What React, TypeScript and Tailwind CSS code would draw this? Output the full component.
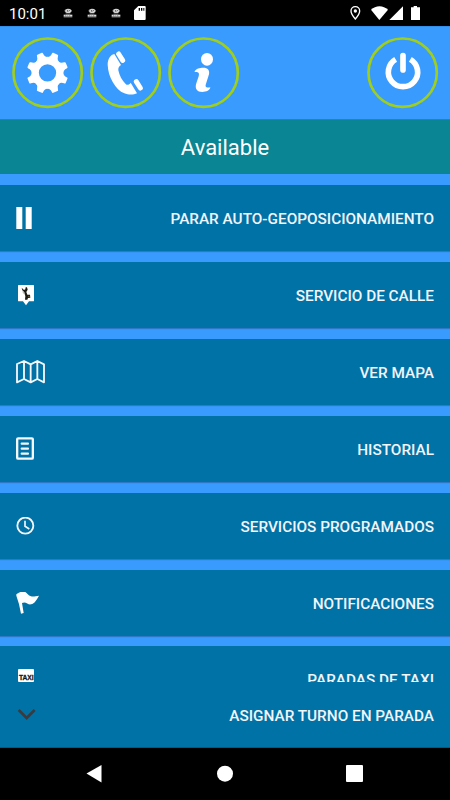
import type { ReactNode } from "react";

type RowProps = {
  label: string;
  icon: ReactNode;
};

function StatusBar() {
  return (
    <div className="h-[26px] shrink-0 bg-black flex text-white">
      <span className="w-[58px] pl-[9px] pt-[1px] text-[15px] leading-[26px]">
        10:01
      </span>
      <div className="flex gap-[14px] pl-[5px] pt-[8px]">
        <NoticeIcon />
        <NoticeIcon />
        <NoticeIcon />
      </div>
      <svg
        className="ml-[13px] mt-[6px] w-[12px] h-[14px]"
        viewBox="0 0 36 42"
        fill="white"
      >
        <path d="M13 0H32Q35 0 35 3V39Q35 42 32 42H3Q0 42 0 39V13Z" />
        <path d="M14 6h4v8h-4zM21 6h4v8h-4zM28 6h3v8h-3z" fill="black" />
      </svg>
      <svg
        className="ml-auto mt-[5px] w-[72px] h-[16px]"
        viewBox="567 15 216 48"
        fill="white"
      >
        <path
          d="M586 20C578 20 573 26 573 33C573 42 586 57 586 57S599 42 599 33C599 26 594 20 586 20Z"
          fill="none"
          stroke="white"
          strokeWidth="4"
        />
        <circle cx="586" cy="33" r="5" />
        <path d="M658 60L633 29C647 15 670 15 684 29Z" />
        <path d="M729 19V60H688Z" />
        <path d="M761 18h10v4h9v38h-27V22h8z" />
      </svg>
      <div className="w-[29px]" />
    </div>
  );
}

function NoticeIcon() {
  return (
    <svg className="w-[10px] h-[10px]" viewBox="0 0 30 30">
      <path
        d="M5 6L11 3L15 2L21 3L26 7L25 12L20 15H11L6 12Z"
        fill="#d4d4d4"
      />
      <path
        d="M3 9h5M13 6l2 6M20 6l-2 3"
        stroke="#333"
        strokeWidth="2"
      />
      <path d="M8 18h14" stroke="#aaa" strokeWidth="2" />
      <path d="M2 23h26" stroke="#ddd" strokeWidth="6" />
      <path
        d="M8 20v6M14 22v3M20 20v6"
        stroke="#555"
        strokeWidth="1.5"
      />
      <path d="M2 28h26" stroke="#888" strokeWidth="1.5" />
    </svg>
  );
}

function RoundButton({ children }: { children: ReactNode }) {
  return (
    <button type="button" className="w-[72px] h-[72px] rounded-full">
      <svg className="w-[72px] h-[72px]" viewBox="0 0 216 216" fill="white">
        <circle
          cx="107"
          cy="107"
          r="102.5"
          fill="none"
          stroke="#9fce1c"
          strokeWidth="8"
        />
        {children}
      </svg>
    </button>
  );
}

function Header() {
  const teeth = [22.5, 67.5, 112.5, 157.5, 202.5, 247.5, 292.5, 337.5];

  return (
    <header className="h-[93px] shrink-0 bg-[#3a9bff] border-t border-[#2f8fea] flex items-start gap-[6px] pl-[12px] pr-[11px] pt-[10px]">
      <RoundButton>
        <circle
          cx="106.5"
          cy="107.5"
          r="37"
          fill="none"
          stroke="white"
          strokeWidth="22"
        />
        {teeth.map((angle) => (
          <path
            key={angle}
            d="M-20 -41Q-10 -48 -10 -58Q-10 -62 -7 -62H7Q10 -62 10 -58Q10 -48 20 -41Z"
            transform={`translate(106.5 107.5) rotate(${angle})`}
          />
        ))}
      </RoundButton>
      <RoundButton>
        <path d="M73 51C60 54 53 67 53 83C54 120 77 158 103 169C117 175 132 173 141 169L122 137C118 143 112 146 107 141C96 131 88 115 85 100C84 93 87 88 93 84Z" />
        <path
          d="M86 51L98 70M139 134L151 153"
          stroke="white"
          strokeWidth="15"
          strokeLinecap="round"
        />
      </RoundButton>
      <RoundButton>
        <ellipse cx="117" cy="67" rx="18" ry="19" />
        <path d="M80 103C84 95 95 92 106 92C119 92 126 100 123 112L114 140C111 149 113 153 127 151C126 160 115 165 103 165C87 165 81 156 84 142L92 118C95 107 91 104 80 105Z" />
      </RoundButton>
      <div className="grow" />
      <RoundButton>
        <path
          d="M86 67A44 44 0 1 0 130 67"
          fill="none"
          stroke="white"
          strokeWidth="17"
        />
        <path
          d="M108 56V99"
          stroke="white"
          strokeWidth="17"
          strokeLinecap="round"
        />
      </RoundButton>
    </header>
  );
}

function Row({ label, icon }: RowProps) {
  return (
    <button
      type="button"
      className="h-[66px] w-full shrink-0 bg-[#0072a6] shadow-[0_1px_1px_rgba(0,0,0,0.22)] flex items-center justify-between px-4"
    >
      {icon}
      <span className="pt-[2px] text-[15.33px] font-medium text-[#f2f5fa]">
        {label}
      </span>
    </button>
  );
}

const rows: RowProps[] = [
  {
    label: "PARAR AUTO-GEOPOSICIONAMIENTO",
    icon: (
      <svg className="w-[16px] h-[22px]" viewBox="0 0 16 22" fill="white">
        <path d="M0.3 0h6v22h-6zM9.7 0h6v22h-6z" />
      </svg>
    ),
  },
  {
    label: "SERVICIO DE CALLE",
    icon: (
      <svg
        className="w-[20px] h-[21px]"
        viewBox="48 268 60 63"
        fill="white"
      >
        <path d="M56 268H100Q102 268 102 270V315Q102 317 100 317H87L78 329L69 317H56Q54 317 54 315V270Q54 268 56 268Z" />
        <path
          d="M65 276L72 283L76 281L77 275H81L83 282L79 289L82 297H90L91 306L84 307L82 312H75L76 302L73 290L67 284Z"
          fill="#1c1b14"
        />
        <path
          d="M68 288L74 296M84 302L89 302"
          stroke="#8b7c4f"
          strokeWidth="2"
        />
      </svg>
    ),
  },
  {
    label: "VER MAPA",
    icon: (
      <svg
        className="w-[30px] h-[24px]"
        viewBox="48 44 90 72"
        fill="none"
        stroke="#f4f7fc"
        strokeWidth="5.5"
        strokeLinejoin="round"
      >
        <path d="M51 56L72 47L92 57L112 47L132 57V111L112 101L92 111L72 101L51 111ZM72 47V101M92 57V111M112 47V101" />
      </svg>
    ),
  },
  {
    label: "HISTORIAL",
    icon: (
      <svg
        className="w-[18px] h-[24px]"
        viewBox="48 275 54 72"
        fill="none"
        stroke="#f4f7fc"
      >
        <rect x="51.5" y="279" width="47" height="61" rx="3" strokeWidth="7" />
        <path
          d="M65 295H84M65 310H84M65 325H84"
          strokeWidth="6.5"
          strokeLinecap="round"
        />
      </svg>
    ),
  },
  {
    label: "SERVICIOS PROGRAMADOS",
    icon: (
      <svg
        className="w-[19px] h-[18px]"
        viewBox="48 64 57 54"
        fill="none"
        stroke="#f4f7fc"
      >
        <circle cx="76" cy="90" r="24" strokeWidth="5.5" />
        <path d="M75 75V92L88 100" strokeWidth="5" />
      </svg>
    ),
  },
  {
    label: "NOTIFICACIONES",
    icon: (
      <svg
        className="w-[24px] h-[23px]"
        viewBox="49 290 72 69"
        fill="white"
      >
        <path d="M50 297Q60 288 73 289C81 289 84 301 94 303C102 305 110 301 118 301C111 313 105 325 94 327C84 329 79 317 67 323L72 353L64 355Q59 324 50 301Z" />
      </svg>
    ),
  },
];

function TaxiIcon() {
  return (
    <svg className="w-[18px] h-[13px]" viewBox="0 0 18 13">
      <rect x="2" y="0" width="16" height="13" rx="1" fill="white" />
      <text
        x="3"
        y="11"
        fontSize="7"
        fontWeight="800"
        textLength="14.6"
        lengthAdjust="spacingAndGlyphs"
        fill="#151515"
        stroke="#151515"
        strokeWidth="0.3"
        fontFamily="Liberation Sans, sans-serif"
      >
        TAXI
      </text>
    </svg>
  );
}

export default function App() {
  return (
    <div className="w-[450px] h-[800px] overflow-hidden flex flex-col bg-[#3a9bff] font-['Roboto',sans-serif]">
      <StatusBar />
      <Header />
      <div className="h-[55px] shrink-0 bg-[#098593] border-t border-[#1b88b0] flex items-center justify-center pt-px text-[22px] text-white">
        Available
      </div>
      <main className="h-[508px] shrink-0 overflow-hidden flex flex-col gap-[11px] pt-[11px]">
        {rows.map((row) => (
          <Row key={row.label} label={row.label} icon={row.icon} />
        ))}
        {/* last row is cut off by the fixed action below */}
        <div className="h-[36px] -mt-px shrink-0 overflow-hidden bg-[#0072a6] flex items-start justify-between px-4">
          <div className="pt-[23px]">
            <TaxiIcon />
          </div>
          <span className="pt-[23px] text-[15.33px] font-medium text-[#f2f5fa]">
            PARADAS DE TAXI
          </span>
        </div>
      </main>
      <button
        type="button"
        className="h-[66px] w-full shrink-0 bg-[#0072a6] border-b border-[#005a84] flex items-center justify-between px-4"
      >
        <svg
          className="w-[20px] h-[13px]"
          viewBox="48 219 60 39"
          fill="none"
          stroke="#3b3b3f"
          strokeWidth="8"
        >
          <path d="M56 225L80 249L104 225" />
        </svg>
        <span className="pt-[3px] text-[15.33px] font-medium text-[#f2f5fa]">
          ASIGNAR TURNO EN PARADA
        </span>
      </button>
      <nav className="grow bg-black">
        <svg className="w-[450px] h-[52px]" viewBox="0 748 450 52" fill="white">
          <path d="M86.5 773.5L101.5 765V782.5Z" />
          <circle cx="225" cy="773.7" r="8" />
          <rect x="346" y="765" width="17" height="17" rx="1" />
        </svg>
      </nav>
    </div>
  );
}
